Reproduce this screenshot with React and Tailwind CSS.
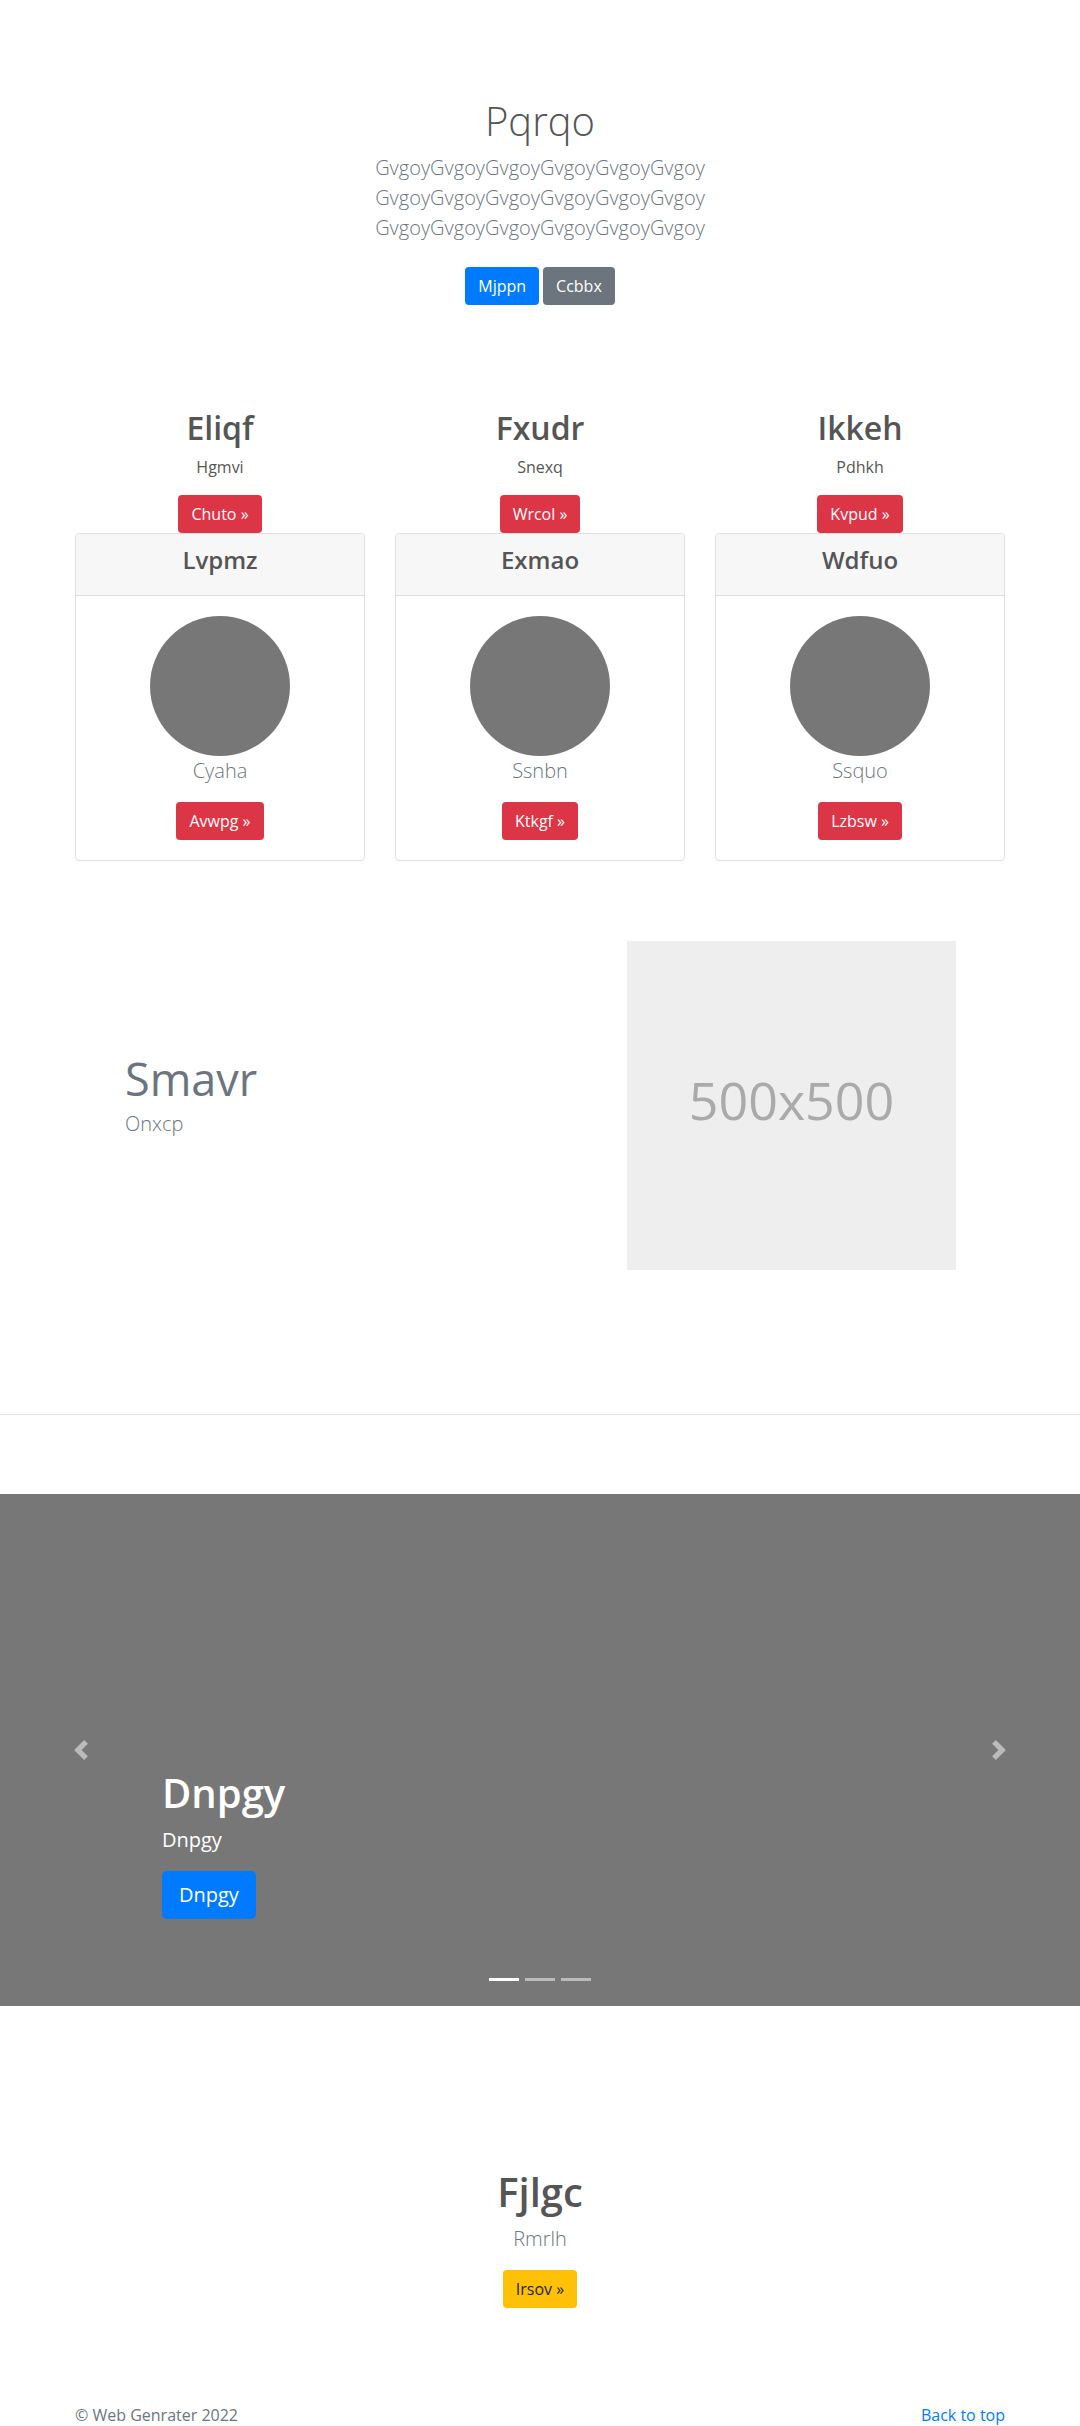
import React from "react";

const Btn = ({ children, cls }) => (
  <a className={"inline-block px-3 py-[6px] text-[16px] leading-6 rounded border border-transparent " + cls}>{children}</a>
);

const Prev = () => (
  <svg width="20" height="20" viewBox="0 0 8 8" fill="#fff" opacity="0.5">
    <path d="M5.25 0l-4 4 4 4 1.5-1.5L4.25 4l2.5-2.5L5.25 0z" />
  </svg>
);
const Next = () => (
  <svg width="20" height="20" viewBox="0 0 8 8" fill="#fff" opacity="0.5">
    <path d="M2.75 0l-1.5 1.5L3.75 4l-2.5 2.5L2.75 8l4-4-4-4z" />
  </svg>
);

const cols = [
  { h: "Eliqf", p: "Hgmvi", b: "Chuto »", ch: "Lvpmz", cap: "Cyaha", cb: "Avwpg »" },
  { h: "Fxudr", p: "Snexq", b: "Wrcol »", ch: "Exmao", cap: "Ssnbn", cb: "Ktkgf »" },
  { h: "Ikkeh", p: "Pdhkh", b: "Kvpud »", ch: "Wdfuo", cap: "Ssquo", cb: "Lzbsw »" },
];

export default function App() {
  return (
    <div className="bg-white font-['Open_Sans',sans-serif] text-[#555] w-[1080px] h-[2426px] overflow-hidden">
      {/* Jumbotron */}
      <section className="pt-[97px] pb-[48px] text-center">
        <h1 className="text-[40px] font-light leading-[48px] mb-2">Pqrqo</h1>
        <p className="text-[20px] font-light leading-[30px] text-[#6c757d] mb-4">
          <span className="block">GvgoyGvgoyGvgoyGvgoyGvgoyGvgoy</span>
          <span className="block">GvgoyGvgoyGvgoyGvgoyGvgoyGvgoy</span>
          <span className="block">GvgoyGvgoyGvgoyGvgoyGvgoyGvgoy</span>
        </p>
        <div className="flex justify-center gap-[4px] py-2">
          <Btn cls="bg-[#007bff] text-white">Mjppn</Btn>
          <Btn cls="bg-[#6c757d] text-white">Ccbbx</Btn>
        </div>
      </section>

      {/* Columns with cards */}
      <section className="w-[960px] mx-auto px-[15px] mt-[48px] grid grid-cols-3 gap-[30px]">
        {cols.map((c) => (
          <div key={c.h} className="flex flex-col items-center text-center">
            <h2 className="text-[32px] font-semibold leading-[38.4px] mb-2">{c.h}</h2>
            <p className="text-[16px] leading-6 mb-4">{c.p}</p>
            <Btn cls="bg-[#dc3545] text-white">{c.b}</Btn>
            <div className="w-full border border-[#dfdfdf] rounded mt-0">
              <div className="bg-[#f7f7f7] border-b border-[#dfdfdf] py-3 px-5 rounded-t">
                <h4 className="text-[24px] font-semibold leading-[28.8px] mb-2">{c.ch}</h4>
              </div>
              <div className="p-5 flex flex-col items-center">
                <div className="w-[140px] h-[140px] rounded-full bg-[#777]" />
                <p className="text-[20px] font-light leading-[30px] text-[#6c757d] mb-4">{c.cap}</p>
                <Btn cls="bg-[#dc3545] text-white">{c.cb}</Btn>
              </div>
            </div>
          </div>
        ))}
      </section>

      {/* Featurette */}
      <section className="w-[960px] mx-auto px-[15px] mt-[80px] flex items-center">
        <div className="w-[552px] pl-[50px]">
          <h2 className="text-[45px] font-normal leading-[45px] text-[#6c757d] mb-2">Smavr</h2>
          <p className="text-[20px] font-light leading-[30px] text-[#6c757d] mb-4">Onxcp</p>
        </div>
        <div className="w-[329px] h-[329px] bg-[#eee] flex items-center justify-center">
          <span className="text-[52px] text-[#aaa] leading-none mb-[12px]">500x500</span>
        </div>
      </section>

      <hr className="mt-[144px] border-0 border-t border-[#e6e6e6]" />

      {/* Carousel */}
      <section className="relative mt-[79px] h-[512px] bg-[#777]">
        <div className="absolute left-0 top-0 bottom-0 w-[15%] flex items-center justify-center">
          <Prev />
        </div>
        <div className="absolute right-0 top-0 bottom-0 w-[15%] flex items-center justify-center">
          <Next />
        </div>
        <div className="absolute left-[15%] right-[15%] bottom-[51px] pb-5 text-white">
          <h1 className="text-[40px] font-semibold leading-[48px] mb-2">Dnpgy</h1>
          <p className="text-[20px] leading-[30px] mb-4">Dnpgy</p>
          <div className="flex mb-4">
            <a className="inline-block px-4 py-2 text-[20px] leading-[30px] rounded-[4.8px] bg-[#007bff] text-white border border-transparent">Dnpgy</a>
          </div>
        </div>
        <div className="absolute left-0 right-0 bottom-[25px] flex justify-center gap-[6px]">
          <span className="w-[30px] h-[3px] bg-white" />
          <span className="w-[30px] h-[3px] bg-white/50" />
          <span className="w-[30px] h-[3px] bg-white/50" />
        </div>
      </section>

      {/* Bottom CTA */}
      <section className="mt-[162px] text-center flex flex-col items-center">
        <h1 className="text-[40px] font-semibold leading-[48px] mb-2">Fjlgc</h1>
        <p className="text-[20px] font-light leading-[30px] text-[#6c757d] mb-4">Rmrlh</p>
        <Btn cls="bg-[#ffc107] text-[#212529]">Irsov »</Btn>
      </section>

      {/* Footer */}
      <footer className="mt-[95px] w-[960px] mx-auto px-[15px] flex justify-between text-[16px] leading-6 text-[#6c757d]">
        <p>© Web Genrater 2022</p>
        <a className="text-[#007bff]">Back to top</a>
      </footer>
    </div>
  );
}
